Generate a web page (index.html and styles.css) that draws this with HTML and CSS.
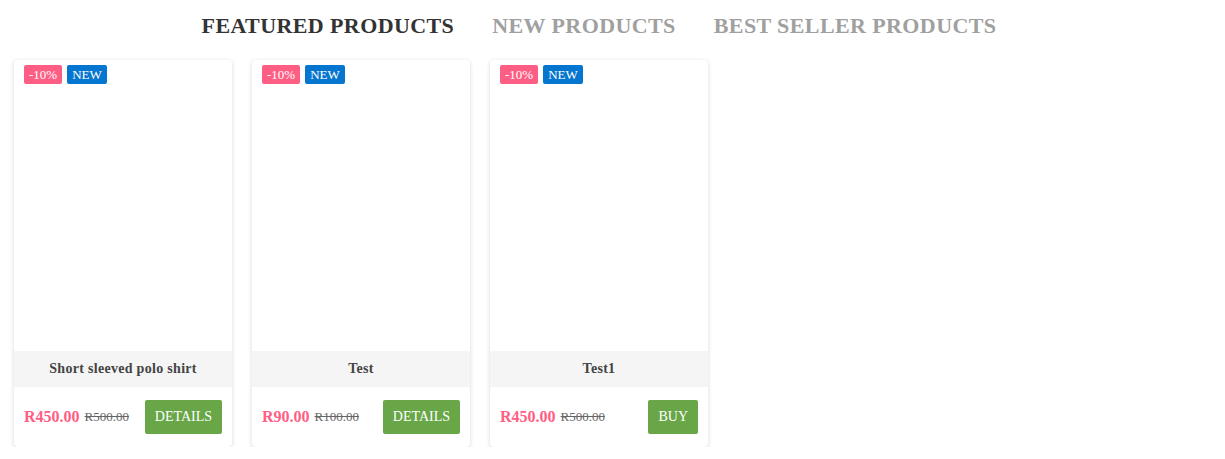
FILE: index.html
```html
<!DOCTYPE html>
<html>
<head>
<meta charset="utf-8">
<link rel="stylesheet" href="styles.css">
</head>
<body>
<nav class="tabs">
  <a class="tab active">FEATURED PRODUCTS</a>
  <a class="tab">NEW PRODUCTS</a>
  <a class="tab">BEST SELLER PRODUCTS</a>
</nav>
<div class="grid">
  <div class="card">
    <div class="image">
      <div class="badges"><span class="badge sale">-10%</span><span class="badge new">NEW</span></div>
    </div>
    <div class="title">Short sleeved polo shirt</div>
    <div class="foot">
      <div class="prices"><span class="price">R450.00</span><span class="old">R500.00</span></div>
      <a class="btn">DETAILS</a>
    </div>
  </div>
  <div class="card">
    <div class="image">
      <div class="badges"><span class="badge sale">-10%</span><span class="badge new">NEW</span></div>
    </div>
    <div class="title">Test</div>
    <div class="foot">
      <div class="prices"><span class="price">R90.00</span><span class="old">R100.00</span></div>
      <a class="btn">DETAILS</a>
    </div>
  </div>
  <div class="card">
    <div class="image">
      <div class="badges"><span class="badge sale">-10%</span><span class="badge new">NEW</span></div>
    </div>
    <div class="title">Test1</div>
    <div class="foot">
      <div class="prices"><span class="price">R450.00</span><span class="old">R500.00</span></div>
      <a class="btn">BUY</a>
    </div>
  </div>
</div>
</body>
</html>
```
FILE: styles.css
```css
* { box-sizing: border-box; }
body {
  margin: 0;
  padding: 0 14px;
  font-family: "Liberation Serif", "Times New Roman", serif;
  background: #fff;
  color: #333;
}
.tabs {
  display: flex;
  justify-content: center;
  gap: 38px;
  padding: 12px 27px 0 0;
  height: 60px;
}
.tab {
  font-size: 22px;
  font-weight: bold;
  letter-spacing: 0.4px;
  color: #a0a0a0;
  line-height: 28px;
}
.tab.active { color: #333; }
.grid {
  display: flex;
  gap: 20px;
}
.card {
  width: 218px;
  height: 387px;
  background: #fff;
  border-radius: 4px;
  box-shadow: 0 1px 4px rgba(0,0,0,0.16);
  display: flex;
  flex-direction: column;
  overflow: hidden;
}
.image {
  height: 291px;
  padding: 5px 10px;
}
.badges { display: flex; gap: 5px; }
.badge {
  color: #fff;
  font-size: 13px;
  line-height: 19px;
  height: 19px;
  padding: 0 5px;
  border-radius: 2px;
}
.sale { background: #ff5e84; }
.new { background: #0576cf; }
.title {
  height: 36px;
  background: #f5f5f5;
  text-align: center;
  font-size: 14px;
  font-weight: bold;
  line-height: 36px;
  color: #444;
  letter-spacing: 0.3px;
}
.foot {
  flex: 1;
  display: flex;
  align-items: center;
  justify-content: space-between;
  padding: 0 10px;
}
.prices { display: flex; align-items: center; gap: 5px; }
.price { color: #ff5e84; font-weight: bold; font-size: 16px; }
.old { color: #666; font-size: 13px; text-decoration: line-through; }
.btn {
  background: #68a647;
  color: #fff;
  font-size: 14px;
  height: 34px;
  line-height: 34px;
  padding: 0 10px;
  border-radius: 2px;
}
```
